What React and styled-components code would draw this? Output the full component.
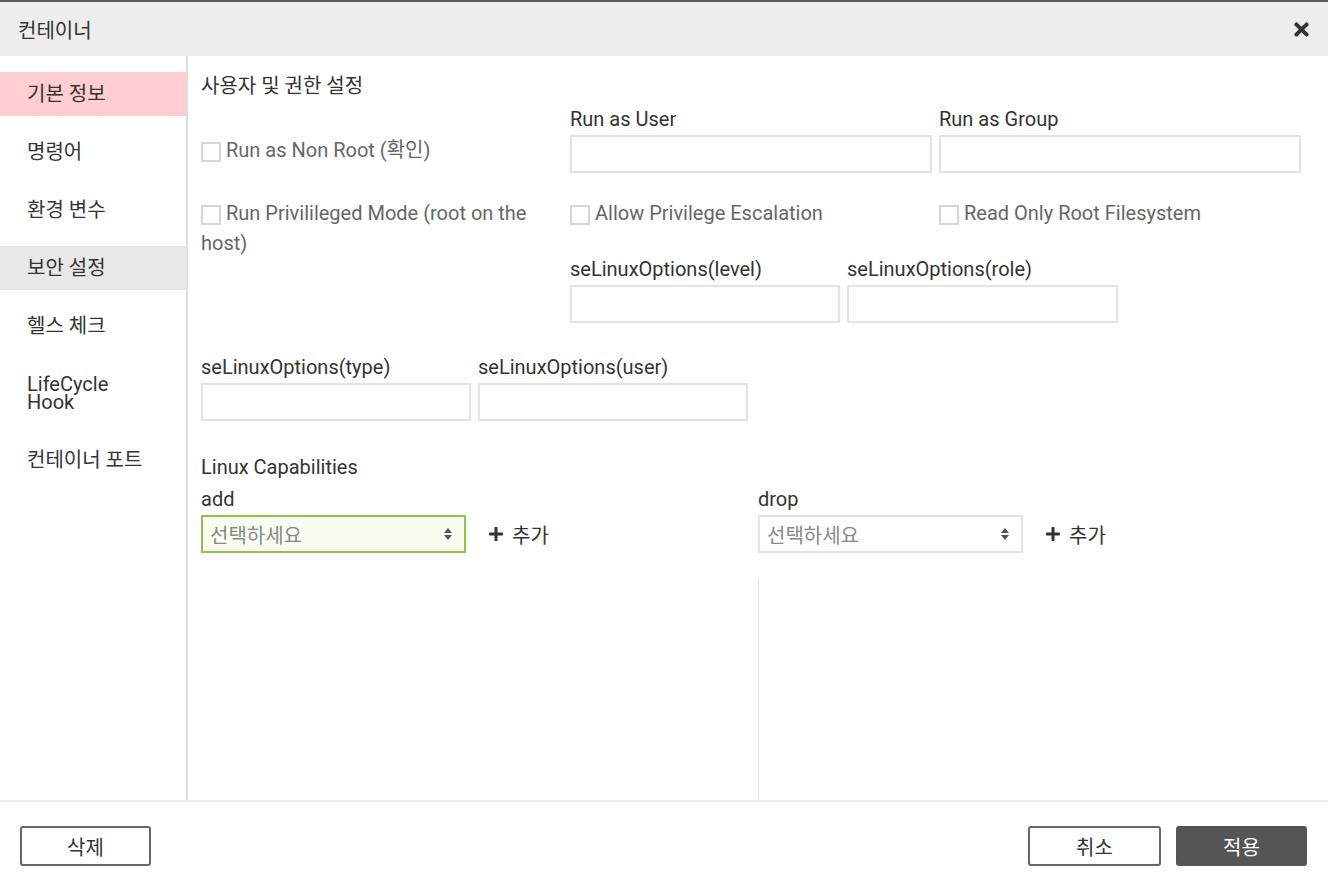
import styled, { createGlobalStyle } from "styled-components";
import { FaTimes, FaPlus } from "react-icons/fa";

const GlobalStyle = createGlobalStyle`
  html, body { margin: 0; padding: 0; background: #fff; }
  body {
    font-family: Roboto, "Noto Sans CJK KR", sans-serif;
    color: #333;
  }
  * { box-sizing: border-box; }
`;

const Modal = styled.div`
  height: 886px;
  display: flex;
  flex-direction: column;
  background: #fff;
`;

const Header = styled.div`
  height: 56px;
  flex: none;
  border-top: 2px solid #5c5c5c;
  background: #ededed;
  display: flex;
  align-items: center;
  justify-content: space-between;
  padding: 0 16px 0 18px;
`;

const Title = styled.h1`
  margin: 0;
  font-size: 20px;
  font-weight: 400;
  color: #333;
`;

const CloseButton = styled.button`
  border: 0;
  background: none;
  padding: 0;
  color: #333;
  display: flex;
  cursor: pointer;
`;

const Body = styled.div`
  flex: 1;
  display: flex;
  min-height: 0;
`;

const Sidebar = styled.nav`
  width: 188px;
  flex: none;
  border-right: 2px solid #dedede;
  padding-top: 16px;
`;

const NavItem = styled.div`
  padding: 13px 27px;
  margin-bottom: 14px;
  font-size: 20px;
  line-height: 18px;
  color: #333;
  background: ${(p) =>
    p.$active ? "#ffcdd2" : p.$hover ? "#e8e8e8" : "transparent"};
`;

const Content = styled.div`
  flex: 1;
  min-width: 0;
  padding: 18px 13px 0;
  display: flex;
  flex-direction: column;
  overflow: hidden;
`;

const SectionTitle = styled.h2`
  margin: 0;
  font-size: 20px;
  line-height: 24px;
  font-weight: 400;
  color: #333;
`;

const PermGrid = styled.div`
  margin-top: 9px;
  display: grid;
  grid-template-columns: 362px 362px 362px;
  column-gap: 7px;
  align-items: start;
`;

const Field = styled.div`
  display: flex;
  flex-direction: column;
  width: ${(p) => p.$width || "100%"};
`;

const FieldLabel = styled.label`
  font-size: 20px;
  line-height: 24px;
  margin-bottom: 4px;
  color: #333;
`;

const TextInput = styled.input`
  height: 38px;
  width: 100%;
  border: 2px solid #e3e3e3;
  outline: none;
  font: inherit;
  padding: 0 8px;
`;

const CheckLabel = styled.label`
  display: block;
  margin-top: ${(p) => p.$top || 0}px;
  font-size: 20px;
  line-height: 30px;
  color: #666;
  ${(p) => p.$span && "grid-row: span 2;"}
`;

const Box = styled.span`
  display: inline-block;
  width: 20px;
  height: 20px;
  border: 2px solid #d6d6d6;
  background: #fff;
  vertical-align: -5px;
  margin-right: 5px;
`;

const FieldRow = styled.div`
  display: flex;
  gap: ${(p) => p.$gap || 7}px;
  margin-top: ${(p) => p.$top || 0}px;
  ${(p) => p.$wide && "grid-column: 2 / span 2;"}
`;

const CapTitle = styled.div`
  margin-top: 34px;
  font-size: 20px;
  line-height: 24px;
  color: #333;
`;

const CapColumns = styled.div`
  flex: 1;
  margin-top: 8px;
  display: grid;
  grid-template-columns: 550px 550px;
  column-gap: 7px;
`;

const CapColumn = styled.div`
  display: flex;
  flex-direction: column;
`;

const SelectRow = styled.div`
  display: flex;
  align-items: center;
  gap: 22px;
`;

const SelectBox = styled.div`
  width: 265px;
  height: 38px;
  border: 2px solid ${(p) => (p.$focus ? "#8cc34b" : "#e3e3e3")};
  background: ${(p) => (p.$focus ? "#f9fdf0" : "#fff")};
  display: flex;
  align-items: center;
  justify-content: space-between;
  padding: 0 12px 0 7px;
  font-size: 20px;
  color: #888;
`;

const AddButton = styled.button`
  border: 0;
  background: none;
  padding: 0;
  display: flex;
  align-items: center;
  gap: 8px;
  font: inherit;
  font-size: 20px;
  color: #333;
  cursor: pointer;
`;

const ListArea = styled.div`
  flex: 1;
  margin-top: 27px;
  border-left: ${(p) => (p.$bordered ? "1px solid #e4e4e4" : "0")};
`;

const Footer = styled.div`
  height: 86px;
  flex: none;
  border-top: 2px solid #eee;
  padding: 24px 21px 0 20px;
  display: flex;
  justify-content: space-between;
  align-items: flex-start;
`;

const ButtonGroup = styled.div`
  display: flex;
  gap: 15px;
`;

const Button = styled.button`
  width: ${(p) => p.$width || 131}px;
  height: 40px;
  border: 2px solid ${(p) => (p.$primary ? "#555" : "#666")};
  border-radius: 3px;
  background: ${(p) => (p.$primary ? "#555" : "#fff")};
  color: ${(p) => (p.$primary ? "#fff" : "#333")};
  font: inherit;
  font-size: 20px;
  cursor: pointer;
`;

function SortArrows() {
  return (
    <svg width="8" height="12" viewBox="0 0 8 12">
      <path d="M4 0 L8 5 L0 5 Z M4 12 L8 7 L0 7 Z" fill="#555" />
    </svg>
  );
}

function Check({ children, top, span }) {
  return (
    <CheckLabel $top={top} $span={span}>
      <Box />
      {children}
    </CheckLabel>
  );
}

function CapSelect({ label, focus, bordered }) {
  return (
    <CapColumn>
      <FieldLabel>{label}</FieldLabel>
      <SelectRow>
        <SelectBox $focus={focus}>
          선택하세요
          <SortArrows />
        </SelectBox>
        <AddButton>
          <FaPlus size={16} />
          추가
        </AddButton>
      </SelectRow>
      <ListArea $bordered={bordered} />
    </CapColumn>
  );
}

const menu = ["기본 정보", "명령어", "환경 변수", "보안 설정", "헬스 체크", "LifeCycle Hook", "컨테이너 포트"];

export default function App() {
  return (
    <Modal>
      <GlobalStyle />
      <Header>
        <Title>컨테이너</Title>
        <CloseButton>
          <FaTimes size={21} />
        </CloseButton>
      </Header>
      <Body>
        <Sidebar>
          {menu.map((m, i) => (
            <NavItem key={m} $active={i === 0} $hover={i === 3}>
              {m === "LifeCycle Hook" ? (
                <>
                  LifeCycle
                  <br />
                  Hook
                </>
              ) : (
                m
              )}
            </NavItem>
          ))}
        </Sidebar>
        <Content>
          <SectionTitle>사용자 및 권한 설정</SectionTitle>
          <PermGrid>
            <Check top={28}>Run as Non Root (확인)</Check>
            <Field>
              <FieldLabel>Run as User</FieldLabel>
              <TextInput />
            </Field>
            <Field>
              <FieldLabel>Run as Group</FieldLabel>
              <TextInput />
            </Field>
            <Check top={25} span>
              Run Privilileged Mode (root on the host)
            </Check>
            <Check top={25}>Allow Privilege Escalation</Check>
            <Check top={25}>Read Only Root Filesystem</Check>
            <FieldRow $wide $top={29}>
              <Field $width="270px">
                <FieldLabel>seLinuxOptions(level)</FieldLabel>
                <TextInput />
              </Field>
              <Field $width="271px">
                <FieldLabel>seLinuxOptions(role)</FieldLabel>
                <TextInput />
              </Field>
            </FieldRow>
          </PermGrid>
          <FieldRow $top={32}>
            <Field $width="270px">
              <FieldLabel>seLinuxOptions(type)</FieldLabel>
              <TextInput />
            </Field>
            <Field $width="270px">
              <FieldLabel>seLinuxOptions(user)</FieldLabel>
              <TextInput />
            </Field>
          </FieldRow>
          <CapTitle>Linux Capabilities</CapTitle>
          <CapColumns>
            <CapSelect label="add" focus />
            <CapSelect label="drop" bordered />
          </CapColumns>
        </Content>
      </Body>
      <Footer>
        <Button>삭제</Button>
        <ButtonGroup>
          <Button $width={133}>취소</Button>
          <Button $primary>적용</Button>
        </ButtonGroup>
      </Footer>
    </Modal>
  );
}
